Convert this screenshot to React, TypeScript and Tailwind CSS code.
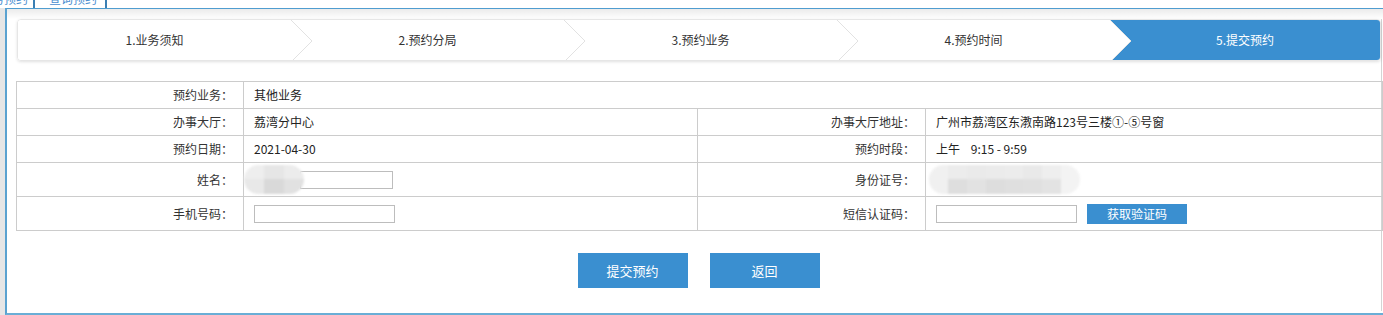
import React from "react";

const steps = ["1.业务须知", "2.预约分局", "3.预约业务", "4.预约时间", "5.提交预约"];

function Chevron() {
  return (
    <svg
      className="absolute top-0 left-full z-10"
      width="22"
      height="42"
      viewBox="0 0 22 42"
    >
      <polygon points="0,0 21,21 0,42" fill="#ffffff" />
      <polyline
        points="0,0 21,21 0,42"
        fill="none"
        stroke="#e2e2e2"
        strokeWidth="1"
      />
    </svg>
  );
}

function Mosaic({ cols, top, bottom }: { cols: number; top: string[]; bottom: string[] }) {
  return (
    <div className="rounded-full overflow-hidden blur-[1px] flex flex-col">
      <div className="flex">
        {Array.from({ length: cols }).map((_, i) => (
          <div key={i} className="w-[20px] h-[14px]" style={{ background: top[i % top.length] }} />
        ))}
      </div>
      <div className="flex">
        {Array.from({ length: cols }).map((_, i) => (
          <div key={i} className="w-[20px] h-[15px]" style={{ background: bottom[i % bottom.length] }} />
        ))}
      </div>
    </div>
  );
}

function Label({ children }: { children: React.ReactNode }) {
  return (
    <td className="border border-[#cccccc] text-right pr-[10px] text-[12px] text-[#333]">
      {children}
    </td>
  );
}

function Value({ children, span }: { children: React.ReactNode; span?: number }) {
  return (
    <td colSpan={span} className="border border-[#cccccc] pl-[10px] text-[12px] text-[#222]">
      {children}
    </td>
  );
}

export default function App() {
  return (
    <div
      className="w-[1383px] h-[315px] bg-white overflow-hidden flex flex-col"
      style={{ fontFamily: '"Microsoft YaHei", "Noto Sans CJK SC", "Liberation Sans", sans-serif' }}
    >
      {/* top tabs, cut off */}
      <div className="h-[8px] flex overflow-hidden">
        <div className="w-[35px] border-r-2 border-[#3a7fb3] overflow-hidden">
          <div className="-mt-[9px] text-[12px] leading-[16px] text-[#4a8ed0] -ml-[20px] whitespace-nowrap">
            业务预约
          </div>
        </div>
        <div className="w-[72px] border-r-2 border-[#3a7fb3] overflow-hidden pl-[14px]">
          <div className="-mt-[9px] text-[12px] leading-[16px] text-[#4a8ed0] whitespace-nowrap">
            查询预约
          </div>
        </div>
      </div>

      <div className="flex flex-1 min-h-0">
        <div className="w-[5px] shrink-0 bg-[#e6e6e6]" />
        <div className="flex-1 border-l-2 border-t border-b-2 border-l-[#5aa2d0] border-t-[#4f9dd0] border-b-[#6aaed6] flex flex-col">
          <div className="h-[10px] bg-gradient-to-b from-[#ebebeb] to-white" />
          <div className="pl-[9px] flex-1 flex flex-col">
            <div className="border-r border-[#d4d4d4] w-[1366px] h-[292px] flex flex-col">
              {/* steps */}
              <div className="ml-[1px] h-[42px] flex rounded-[4px] border border-[#e6e6e6] shadow-[0_1px_3px_rgba(0,0,0,0.12)] overflow-hidden">
                {steps.map((s, i) => (
                  <div
                    key={s}
                    className={
                      i === 4
                        ? "relative flex-1 bg-[#3a8fd0] text-white flex items-center justify-center text-[12px]"
                        : "relative w-[273px] shrink-0 bg-white text-[#333] flex items-center justify-center text-[12px]"
                    }
                  >
                    {s}
                    {i < 4 && <Chevron />}
                  </div>
                ))}
              </div>

              {/* form table */}
              <table className="mt-[20px] w-[1366px] table-fixed border-collapse">
                <colgroup>
                  <col className="w-[227px]" />
                  <col className="w-[454px]" />
                  <col className="w-[228px]" />
                  <col className="w-[457px]" />
                </colgroup>
                <tbody>
                  <tr className="h-[27px]">
                    <Label>预约业务：</Label>
                    <Value span={3}>其他业务</Value>
                  </tr>
                  <tr className="h-[27px]">
                    <Label>办事大厅：</Label>
                    <Value>荔湾分中心</Value>
                    <Label>办事大厅地址：</Label>
                    <Value>广州市荔湾区东漖南路123号三楼①-⑤号窗</Value>
                  </tr>
                  <tr className="h-[27px]">
                    <Label>预约日期：</Label>
                    <Value>2021-04-30</Value>
                    <Label>预约时段：</Label>
                    <Value>上午&nbsp;&nbsp;&nbsp;&nbsp;9:15 - 9:59</Value>
                  </tr>
                  <tr className="h-[34px]">
                    <Label>姓名：</Label>
                    <td className="border border-[#cccccc] pl-0">
                      <div className="flex items-center">
                        <div className="relative z-10">
                          <Mosaic cols={3} top={["#eeeeee", "#e6e6e6", "#ececec"]} bottom={["#e8e8e8", "#d9d9d9", "#e1e1e1"]} />
                        </div>
                        <input className="-ml-[4px] w-[93px] h-[18px] border border-[#bdbdbd] outline-none" />
                      </div>
                    </td>
                    <Label>身份证号：</Label>
                    <td className="border border-[#cccccc] pl-[3px]">
                      <div className="w-[151px]">
                        <Mosaic
                          cols={8}
                          top={["#f0f0f0", "#ececec", "#eaeaea", "#ebebeb", "#ececec", "#e9e9e9", "#eeeeee", "#f3f3f3"]}
                          bottom={["#f0f0f0", "#dedede", "#e2e2e2", "#dddddd", "#dfdfdf", "#e0e0e0", "#e3e3e3", "#f3f3f3"]}
                        />
                      </div>
                    </td>
                  </tr>
                  <tr className="h-[34px]">
                    <Label>手机号码：</Label>
                    <td className="border border-[#cccccc] pl-[10px]">
                      <input className="block w-[141px] h-[18px] border border-[#bdbdbd] outline-none" />
                    </td>
                    <Label>短信认证码：</Label>
                    <td className="border border-[#cccccc] pl-[10px]">
                      <div className="flex items-center gap-[10px]">
                        <input className="block w-[141px] h-[18px] border border-[#bdbdbd] outline-none" />
                        <button className="w-[100px] h-[20px] bg-[#3a8fd0] text-white text-[12px] leading-[20px]">
                          获取验证码
                        </button>
                      </div>
                    </td>
                  </tr>
                </tbody>
              </table>

              <div className="mt-[22px] flex justify-center gap-[22px]">
                <button className="w-[110px] h-[35px] bg-[#3a8fd0] text-white text-[13px]">
                  提交预约
                </button>
                <button className="w-[110px] h-[35px] bg-[#3a8fd0] text-white text-[13px]">
                  返回
                </button>
              </div>
            </div>
          </div>
        </div>
      </div>
    </div>
  );
}
